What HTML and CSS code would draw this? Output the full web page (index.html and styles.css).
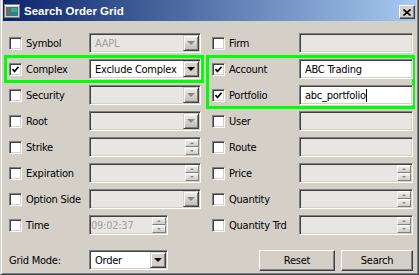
FILE: index.html
```html
<!DOCTYPE html>
<html lang="en">
<head>
    <meta charset="UTF-8">
    <title>Search Order Grid</title>
    <link rel="stylesheet" href="styles.css">
</head>
<body>

<div class="window">
    <div class="titlebar">
        <svg class="app-icon" width="16" height="16" viewBox="0 0 16 16">
            <rect x="0.5" y="1.5" width="15" height="13" fill="#d4d0c8" stroke="#808080"/>
            <rect x="1" y="2" width="14" height="1" fill="#fff"/>
            <rect x="2" y="4" width="4" height="9" fill="#6a6a6a"/>
            <rect x="6" y="4" width="8" height="9" fill="#2f7f86"/>
            <rect x="7" y="5" width="6" height="4" fill="#4fa08a"/>
        </svg>
        <span class="title">Search Order Grid</span>
        <span class="close">
            <svg width="8" height="7" viewBox="0 0 8 7">
                <path d="M0.5 0.5 L7.5 6.5 M7.5 0.5 L0.5 6.5" stroke="#000" stroke-width="1.6"/>
            </svg>
        </span>
    </div>

    <div class="content">
        <div class="columns">
            <div class="col left">
                <div class="row">
                    <span class="check"></span><span class="label">Symbol</span>
                    <div class="field disabled"><span class="val">AAPL</span><span class="drop"><i></i></span></div>
                </div>
                <div class="row hl">
                    <span class="check on"><svg width="7" height="7" viewBox="0 0 7 7"><path d="M0.5 3 L2.5 5.5 L6.5 0.8" stroke="#000" stroke-width="1.7" fill="none"/></svg></span><span class="label">Complex</span>
                    <div class="field"><span class="val">Exclude Complex</span><span class="drop"><i></i></span></div>
                </div>
                <div class="row">
                    <span class="check"></span><span class="label">Security</span>
                    <div class="field disabled"><span class="drop"><i></i></span></div>
                </div>
                <div class="row">
                    <span class="check"></span><span class="label">Root</span>
                    <div class="field disabled"><span class="drop"><i></i></span></div>
                </div>
                <div class="row">
                    <span class="check"></span><span class="label">Strike</span>
                    <div class="field disabled"><span class="spin"><b class="up"><i></i></b><b class="down"><i></i></b></span></div>
                </div>
                <div class="row">
                    <span class="check"></span><span class="label">Expiration</span>
                    <div class="field disabled"><span class="spin"><b class="up"><i></i></b><b class="down"><i></i></b></span></div>
                </div>
                <div class="row">
                    <span class="check"></span><span class="label">Option Side</span>
                    <div class="field disabled"><span class="drop"><i></i></span></div>
                </div>
                <div class="row">
                    <span class="check"></span><span class="label">Time</span>
                    <div class="field disabled short"><span class="val time">09:02:37</span><span class="spin"><b class="up"><i></i></b><b class="down"><i></i></b></span></div>
                </div>
            </div>

            <div class="col right">
                <div class="row">
                    <span class="check"></span><span class="label">Firm</span>
                    <div class="field disabled"></div>
                </div>
                <div class="group hl">
                    <div class="row">
                        <span class="check on"><svg width="7" height="7" viewBox="0 0 7 7"><path d="M0.5 3 L2.5 5.5 L6.5 0.8" stroke="#000" stroke-width="1.7" fill="none"/></svg></span><span class="label">Account</span>
                        <div class="field"><span class="val">ABC Trading</span></div>
                    </div>
                    <div class="row">
                        <span class="check on"><svg width="7" height="7" viewBox="0 0 7 7"><path d="M0.5 3 L2.5 5.5 L6.5 0.8" stroke="#000" stroke-width="1.7" fill="none"/></svg></span><span class="label">Portfolio</span>
                        <div class="field"><span class="val">abc_portfolio</span><span class="caret"></span></div>
                    </div>
                </div>
                <div class="row">
                    <span class="check"></span><span class="label">User</span>
                    <div class="field disabled"></div>
                </div>
                <div class="row">
                    <span class="check"></span><span class="label">Route</span>
                    <div class="field disabled"></div>
                </div>
                <div class="row">
                    <span class="check"></span><span class="label">Price</span>
                    <div class="field disabled"><span class="spin"><b class="up"><i></i></b><b class="down"><i></i></b></span></div>
                </div>
                <div class="row">
                    <span class="check"></span><span class="label">Quantity</span>
                    <div class="field disabled"><span class="spin"><b class="up"><i></i></b><b class="down"><i></i></b></span></div>
                </div>
                <div class="row">
                    <span class="check"></span><span class="label">Quantity Trd</span>
                    <div class="field disabled"><span class="spin"><b class="up"><i></i></b><b class="down"><i></i></b></span></div>
                </div>
            </div>
        </div>

        <div class="footer">
            <span class="mode-label">Grid Mode:</span>
            <div class="field mode"><span class="val">Order</span><span class="drop"><i></i></span></div>
            <span class="button reset">Reset</span>
            <span class="button">Search</span>
        </div>
    </div>
</div>

</body>
</html>
```

FILE: styles.css
```css
* {
    box-sizing: border-box;
}
body {
    margin: 0;
    font-family: "DejaVu Sans Condensed", "Liberation Sans", sans-serif;
    font-size: 11px;
    letter-spacing: -0.25px;
    color: #000;
    background-color: #d4d0c8;
}
.window {
    width: 419px;
    height: 275px;
    background-color: #d4d0c8;
    border: 1px solid;
    border-top: 0;
    border-color: #d4d0c8 #404040 #404040 #d4d0c8;
    box-shadow: inset 1px 0 #fff, inset -1px -1px #808080;
    padding: 0 2px 2px 2px;
}
.titlebar {
    height: 21px;
    display: flex;
    align-items: center;
    padding: 0 1px 0 1px;
    background: linear-gradient(to right, #0a246a, #a6caf0);
}
.app-icon {
    flex: none;
}
.title {
    margin-left: 4px;
    color: #fff;
    font-family: "Liberation Sans", sans-serif;
    font-weight: bold;
    font-size: 11.5px;
    letter-spacing: 0;
    flex: 1;
}
.close {
    width: 16px;
    height: 14px;
    align-self: flex-end;
    margin-bottom: 2px;
    display: flex;
    align-items: center;
    justify-content: center;
    background-color: #d4d0c8;
    border: 1px solid;
    border-color: #fff #404040 #404040 #fff;
    box-shadow: inset -1px -1px #808080;
}
.content {
    padding: 9px 2px 0 2px;
}
.columns {
    display: flex;
    gap: 4px;
}
.col.left {
    width: 198px;
}
.col.right {
    width: 207px;
}
.row {
    height: 26px;
    display: grid;
    align-items: center;
}
.left .row {
    padding-left: 4px;
    grid-template-columns: 13px 67px 112px;
}
.right .row {
    padding-left: 5px;
    grid-template-columns: 13px 74px 114px;
}
.hl {
    box-shadow: 0 0 0 1px #00ff00, inset 0 0 0 2px #00ff00;
}
.label {
    padding-left: 4px;
    white-space: nowrap;
}
.check {
    width: 13px;
    height: 13px;
    background-color: #fff;
    border: 1px solid;
    border-color: #808080 #fff #fff #808080;
    box-shadow: inset 1px 1px #404040, inset -1px -1px #d4d0c8;
    display: flex;
    align-items: center;
    justify-content: center;
}
.check svg {
    margin: 1px 0 0 0;
}
.field {
    height: 20px;
    padding: 1px;
    display: flex;
    align-items: center;
    background-color: #fff;
    border: 1px solid;
    border-color: #808080 #fff #fff #808080;
    box-shadow: inset 1px 1px #404040, inset -1px -1px #d4d0c8;
}
.field.disabled {
    background-color: #e8e6e2;
}
.field.short {
    width: 79px;
}
.val {
    padding-left: 4px;
    white-space: nowrap;
}
.disabled .val {
    color: #a29f98;
}
.val.time {
    padding-left: 0;
}
.caret {
    width: 1px;
    height: 13px;
    background-color: #000;
}
.drop {
    margin-left: auto;
    width: 16px;
    height: 16px;
    display: flex;
    align-items: center;
    justify-content: center;
    background-color: #d4d0c8;
    border: 1px solid;
    border-color: #d4d0c8 #404040 #404040 #d4d0c8;
    box-shadow: inset 1px 1px #fff, inset -1px -1px #808080;
}
.drop i {
    width: 0;
    height: 0;
    border-style: solid;
    border-width: 4px 4px 0 4px;
    border-color: #000 transparent transparent transparent;
}
.disabled .drop {
    background: linear-gradient(#f2f1ee, #bdbab3);
}
.disabled .drop i {
    border-top-color: #8a8780;
}
.spin {
    margin-left: auto;
    width: 14px;
    height: 16px;
    display: flex;
    flex-direction: column;
}
.spin b {
    flex: 1;
    display: flex;
    align-items: center;
    justify-content: center;
    background: linear-gradient(#f2f1ee, #cfccc5);
    border: 1px solid;
    border-color: #fff #808080 #808080 #fff;
}
.spin i {
    width: 0;
    height: 0;
    border-style: solid;
    border-width: 0 2px 2px 2px;
    border-color: transparent transparent #8a8780 transparent;
}
.spin .down i {
    border-width: 2px 2px 0 2px;
    border-color: #8a8780 transparent transparent transparent;
}
.footer {
    height: 24px;
    margin-top: 10px;
    padding: 0 1px 0 4px;
    display: flex;
    align-items: center;
}
.mode-label {
    width: 80px;
}
.field.mode {
    width: 79px;
}
.button {
    width: 72px;
    height: 21px;
    display: flex;
    align-items: center;
    justify-content: center;
    background-color: #d4d0c8;
    border: 1px solid;
    border-color: #fff #404040 #404040 #fff;
    box-shadow: inset -1px -1px #808080;
}
.button.reset {
    width: 76px;
    margin-left: auto;
    margin-right: 6px;
}
```
